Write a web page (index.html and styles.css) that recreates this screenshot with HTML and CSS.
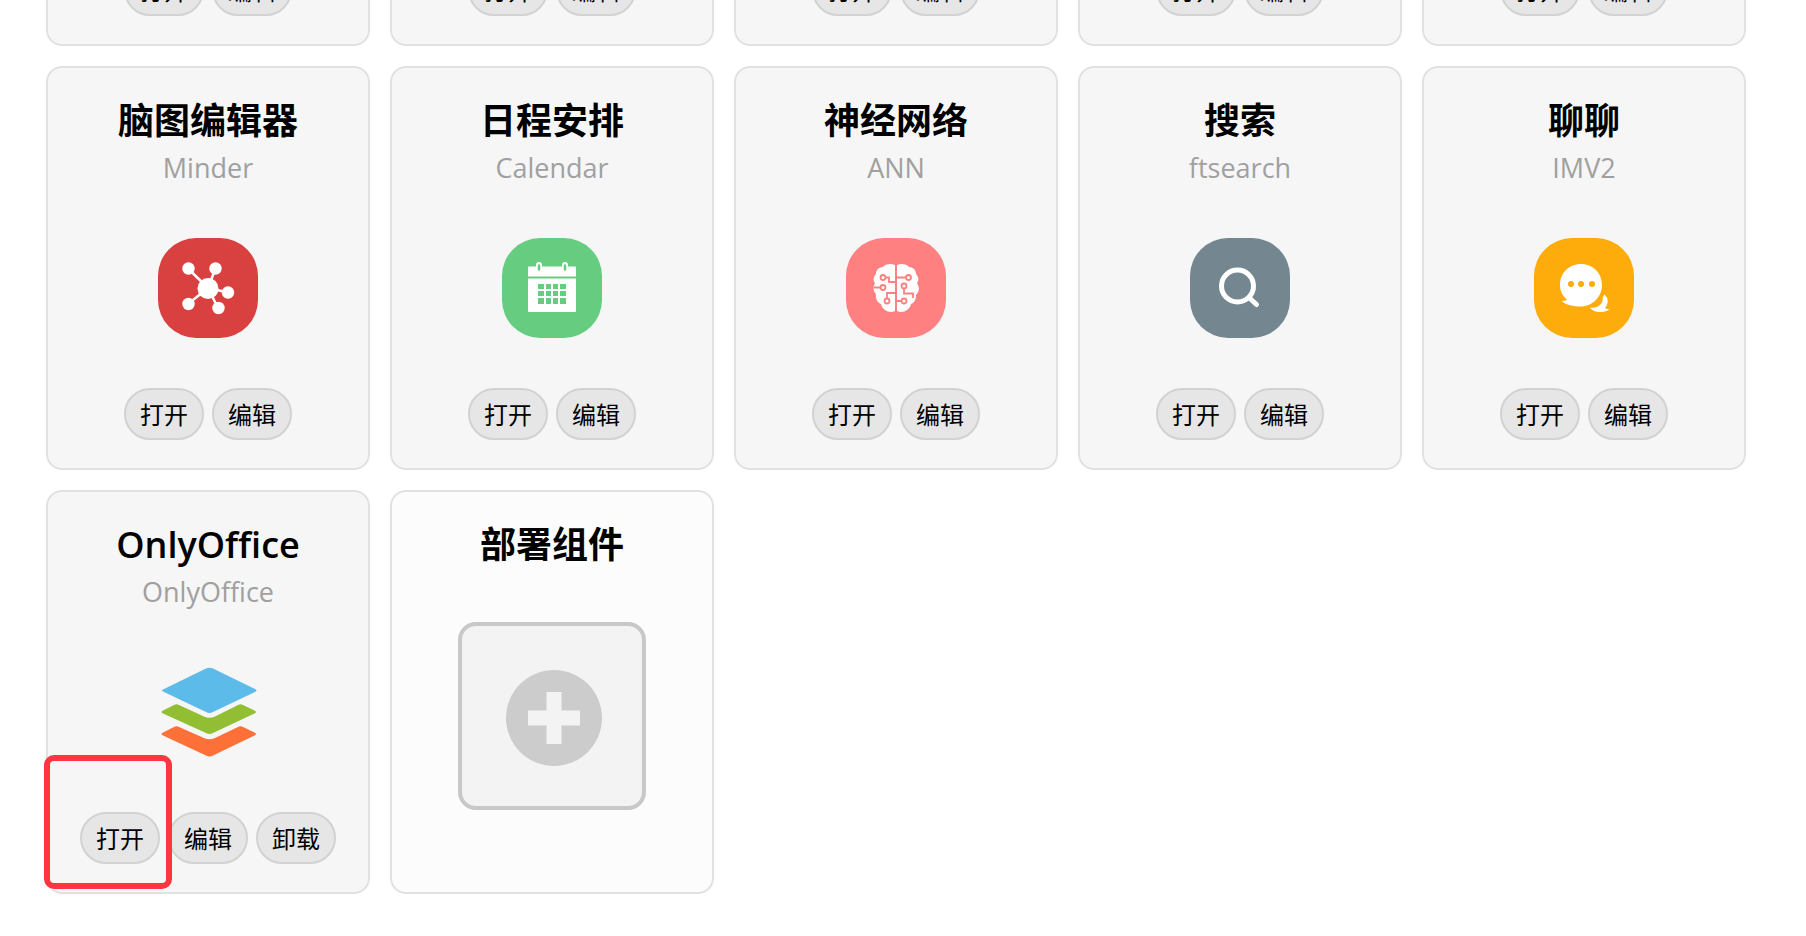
FILE: index.html
```html
<!DOCTYPE html>
<html lang="zh-CN">
<head>
  <meta charset="UTF-8" />
  <meta name="viewport" content="width=device-width, initial-scale=1.0"/>
  <title>组件</title>
  <link rel="stylesheet" href="styles.css">
</head>
<body>
  <main class="app-grid">

    <!-- Row scrolled past the top edge -->
    <div class="card card-cut">
      <div class="actions"><button type="button">打开</button><button type="button">编辑</button></div>
    </div>
    <div class="card card-cut">
      <div class="actions"><button type="button">打开</button><button type="button">编辑</button></div>
    </div>
    <div class="card card-cut">
      <div class="actions"><button type="button">打开</button><button type="button">编辑</button></div>
    </div>
    <div class="card card-cut">
      <div class="actions"><button type="button">打开</button><button type="button">编辑</button></div>
    </div>
    <div class="card card-cut">
      <div class="actions"><button type="button">打开</button><button type="button">编辑</button></div>
    </div>

    <div class="card">
      <h2>脑图编辑器</h2>
      <p>Minder</p>
      <div class="icon icon-minder">
        <svg viewBox="0 0 100 100">
          <path d="M50 50 30 30.500M50 50 57.500 30.500M50 50 70 54.500M50 50 60 70M50 50 30 66" stroke="#fff" stroke-width="2.500"/>
          <g fill="#fff">
            <circle cx="50" cy="50.500" r="10.500"/>
            <circle cx="30.500" cy="30.500" r="6.200"/>
            <circle cx="57.500" cy="30.500" r="6.200"/>
            <circle cx="70" cy="54.500" r="6.200"/>
            <circle cx="60.500" cy="70" r="6.200"/>
            <circle cx="30.500" cy="66" r="6.200"/>
          </g>
        </svg>
      </div>
      <div class="actions"><button type="button">打开</button><button type="button">编辑</button></div>
    </div>

    <div class="card">
      <h2>日程安排</h2>
      <p>Calendar</p>
      <div class="icon icon-calendar">
        <svg viewBox="0 0 100 100">
          <path d="M27 28.500h46a1 1 0 0 1 1 1V38.500H26V29.500a1 1 0 0 1 1-1zM26 40.500h48V73a1 1 0 0 1-1 1H27a1 1 0 0 1-1-1z" fill="#fff"/>
          <path d="M37 27v4.500M63 27v4.500" stroke="#fff" stroke-width="6" stroke-linecap="round"/>
          <path d="M37 27.500v4M63 27.500v4" stroke="#66cc7f" stroke-width="2.500" stroke-linecap="round"/>
          <path d="M36 46h6v5h-6zM44 46h5v5h-5zM51 46h5v5h-5zM58 46h6v5h-6zM36 53h6v5h-6zM44 53h5v5h-5zM51 53h5v5h-5zM58 53h6v5h-6zM36 60h6v6h-6zM44 60h5v6h-5zM51 60h5v6h-5zM58 60h6v6h-6z" fill="#66cc7f"/>
        </svg>
      </div>
      <div class="actions"><button type="button">打开</button><button type="button">编辑</button></div>
    </div>

    <div class="card">
      <h2>神经网络</h2>
      <p>ANN</p>
      <div class="icon icon-ann">
        <svg viewBox="0 0 100 100">
          <path d="M49 27c-4-2-10-1-12 2-4 0-7 3-7 7-3 3-3 7-1 9-2 4-2 8 1 11-1 5 2 9 5 10 1 6 9 10 14 7zM51 27c4-2 10-1 12 2 4 0 7 3 7 7 3 3 3 7 1 9 3 5 2 9-1 12 0 5-2 8-5 9-1 6-9 10-14 7z" fill="#fff"/>
          <g fill="none" stroke="#ff8080" stroke-width="1.800">
            <circle cx="37" cy="39.500" r="2.500"/>
            <circle cx="62.500" cy="39.500" r="2.500"/>
            <circle cx="37" cy="49.500" r="2.500"/>
            <circle cx="58" cy="48" r="2.500"/>
            <circle cx="41" cy="63" r="2.500"/>
            <circle cx="58" cy="63" r="2.500"/>
            <path d="M39.500 39.500H43V44h6M51 39.500h9M28 49.500h6.500M58 50.500V55.500h9V60M41 60.500V55h8M51 63h4.500"/>
          </g>
        </svg>
      </div>
      <div class="actions"><button type="button">打开</button><button type="button">编辑</button></div>
    </div>

    <div class="card">
      <h2>搜索</h2>
      <p>ftsearch</p>
      <div class="icon icon-search">
        <svg viewBox="0 0 100 100">
          <circle cx="47.500" cy="48" r="16" fill="none" stroke="#fff" stroke-width="5"/>
          <path d="M60 60.500 66.500 66.500" stroke="#fff" stroke-width="5" stroke-linecap="round"/>
        </svg>
      </div>
      <div class="actions"><button type="button">打开</button><button type="button">编辑</button></div>
    </div>

    <div class="card">
      <h2>聊聊</h2>
      <p>IMV2</p>
      <div class="icon icon-chat">
        <svg viewBox="0 0 100 100">
          <path d="M47 26C59 26 68 35 68 47S58 68.500 47 68.500C40 68.500 31 67 28 63Q31 63 33 61.500C28 58 26 52 26 47 26 35 35 26 47 26z" fill="#fff"/>
          <path d="M70.500 56.500C75 60 74.500 66 71 70Q73 71.500 76 71C71 75.500 59 75 56 69.500 65 71 70 64 68.500 59.500z" fill="#fff"/>
          <g fill="#fdac0b">
            <circle cx="37" cy="46" r="3"/>
            <circle cx="47" cy="46" r="3"/>
            <circle cx="58" cy="46" r="3"/>
          </g>
        </svg>
      </div>
      <div class="actions"><button type="button">打开</button><button type="button">编辑</button></div>
    </div>

    <div class="card">
      <h2>OnlyOffice</h2>
      <p>OnlyOffice</p>
      <div class="icon">
        <svg viewBox="0 0 100 100">
          <path d="M48 6.500Q51.500 5 55 6.500L97 27Q100 28.500 97 30L55 50Q51.500 52 48 50L6 30Q2 28.500 6 27z" fill="#5dbbea"/>
          <path d="M5 48.500 16 43Q18.500 41.500 21 43L46 54.500Q51.500 57 57 54.500L80 43Q82.500 41.500 85 43L96.500 48.500Q99.500 50 96.500 51.500L55 71Q51.500 73 48 71L5 51.500Q2 50 5 48.500z" fill="#92be33"/>
          <path d="M5 70.500 16 65Q18.500 63.500 21 65L46 76Q51.500 78.500 57 76L80 65Q82.500 63.500 85 65L96.500 70.500Q99.500 72 96.500 73.500L55 93.500Q51.500 95.500 48 93.500L5 73.500Q2 72 5 70.500z" fill="#fd7038"/>
        </svg>
      </div>
      <div class="actions"><button type="button">打开</button><button type="button">编辑</button><button type="button">卸载</button></div>
      <span class="highlight"></span>
    </div>

    <div class="card card-deploy">
      <h2>部署组件</h2>
      <button type="button" class="deploy" aria-label="部署组件">
        <svg viewBox="0 0 180 180">
          <circle cx="92" cy="92" r="48" fill="#ccc"/>
          <path d="M84.500 66h15v18.500H118v15H99.500V118h-15V99.500H66v-15h18.500z" fill="#f3f3f3"/>
        </svg>
      </button>
    </div>

  </main>
</body>
</html>
```
FILE: styles.css
```css
* {
  box-sizing: border-box;
}

body {
  margin: 0;
  background-color: #fff;
  font-family: "Open Sans", "Noto Sans CJK SC", sans-serif;
  font-variant-ligatures: none;
  color: #000;
}

.app-grid {
  display: grid;
  grid-template-columns: repeat(5, 1fr);
  gap: 20px;
  padding: 0 60px 40px 46px;
}

/* Cards */
.card {
  position: relative;
  display: flex;
  flex-direction: column;
  align-items: center;
  min-height: 404px;
  padding: 28px 0;
  background-color: #f6f6f6;
  border: 2px solid #e1e1e1;
  border-radius: 16px;
}

.card h2 {
  margin: 0;
  font-size: 36px;
  line-height: 50px;
  font-weight: 600;
}

.card p {
  margin: 0;
  font-size: 27px;
  line-height: 44px;
  color: #a0a0a0;
}

.card-cut {
  height: 46px;
  min-height: 0;
  padding-top: 0;
  justify-content: flex-end;
  border-top: none;
  border-radius: 0 0 16px 16px;
  overflow: hidden;
}

.card-deploy {
  background-color: #fcfcfc;
}

/* Icons */
.icon {
  width: 100px;
  height: 100px;
  margin-top: 48px;
  border-radius: 38px;
}

.icon svg,
.deploy svg {
  display: block;
  width: 100%;
}

.icon-minder {
  background-color: #d94141;
}

.icon-calendar {
  background-color: #66cc7f;
}

.icon-ann {
  background-color: #ff8080;
}

.icon-search {
  background-color: #748791;
}

.icon-chat {
  background-color: #fdac0b;
}

/* Buttons */
.actions {
  display: flex;
  gap: 8px;
  margin-top: auto;
}

.actions button {
  height: 52px;
  padding: 2px 14px 0;
  font-family: inherit;
  font-size: 24px;
  line-height: 46px;
  color: #000;
  background-color: #e6e6e6;
  border: 2px solid #d2d2d2;
  border-radius: 28px;
  cursor: pointer;
}

.actions button:hover {
  background-color: #ddd;
}

.deploy {
  width: 188px;
  margin-top: 52px;
  padding: 0;
  background-color: #f3f3f3;
  border: 4px solid #c8c8c8;
  border-radius: 18px;
  cursor: pointer;
}

/* Red frame over the open button */
.highlight {
  position: absolute;
  left: -4px;
  bottom: 3px;
  width: 128px;
  height: 134px;
  border: 6px solid #ff3541;
  border-radius: 10px;
  pointer-events: none;
}
```
